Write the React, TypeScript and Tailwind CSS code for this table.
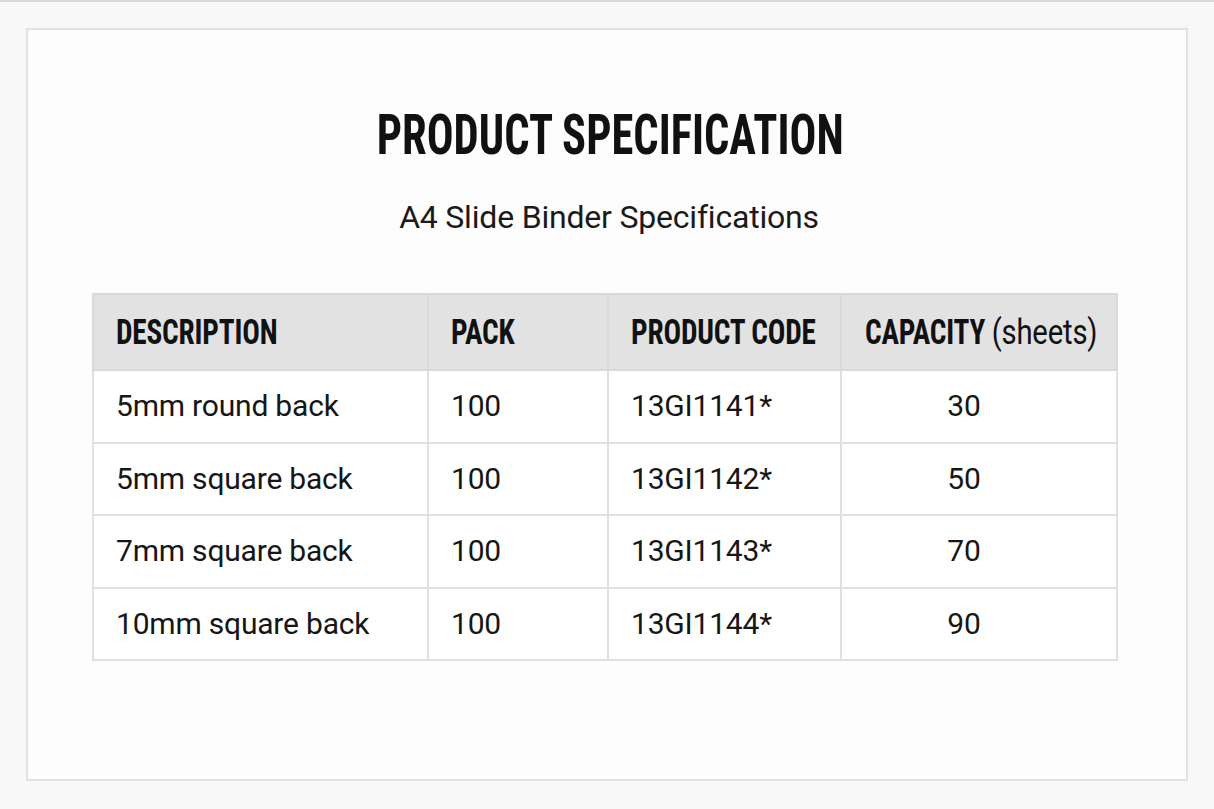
import React from "react";

const rows = [
  { d: "5mm round back", p: "100", c: "13GI1141*", cap: "30" },
  { d: "5mm square back", p: "100", c: "13GI1142*", cap: "50" },
  { d: "7mm square back", p: "100", c: "13GI1143*", cap: "70" },
  { d: "10mm square back", p: "100", c: "13GI1144*", cap: "90" },
];

function Head({ children }: { children: React.ReactNode }) {
  return (
    <span className="inline-block origin-left scale-x-[0.835] whitespace-nowrap font-['Roboto_Condensed',sans-serif] text-[35px] font-bold leading-none text-[#111]">
      {children}
    </span>
  );
}

export default function App() {
  return (
    <div className="h-[809px] w-full overflow-hidden border-t-2 border-[#d9d9d9] bg-[#f8f8f8] pt-[26px] font-['Roboto',sans-serif]">
      <div className="mx-[26px] flex h-[753px] flex-col items-center border-2 border-[#e2e2e2] bg-[#fdfdfd] pt-[78px]">
        <h1 className="ml-[6px] inline-block scale-x-[0.81] whitespace-nowrap font-['Roboto_Condensed',sans-serif] text-[55px] font-bold leading-none text-[#111]">
          PRODUCT SPECIFICATION
        </h1>
        <p className="mt-[38px] ml-[4px] text-[32px] leading-none tracking-[-0.2px] text-[#1a1a1a]">
          A4 Slide Binder Specifications
        </p>
        <table className="mt-[60px] mr-[4px] w-[1024px] table-fixed border-collapse text-[30px] leading-none tracking-[-0.2px] text-[#161616]">
          <colgroup>
            <col className="w-[335px]" />
            <col className="w-[180px]" />
            <col className="w-[233px]" />
            <col className="w-[276px]" />
          </colgroup>
          <thead>
            <tr className="h-[76px] bg-[#e2e2e2]">
              <th className="border-2 border-[#d9d9d9] pl-[22px] text-left align-middle">
                <Head>DESCRIPTION</Head>
              </th>
              <th className="border-2 border-[#d9d9d9] pl-[22px] text-left align-middle">
                <Head>PACK</Head>
              </th>
              <th className="border-2 border-[#d9d9d9] pl-[22px] text-left align-middle">
                <Head>PRODUCT CODE</Head>
              </th>
              <th className="border-2 border-[#d9d9d9] pl-[23px] text-left align-middle">
                <Head>
                  CAPACITY <span className="font-['Roboto',sans-serif] font-normal">(sheets)</span>
                </Head>
              </th>
            </tr>
          </thead>
          <tbody className="bg-white">
            {rows.map((r) => (
              <tr key={r.c} className="h-[72.5px]">
                <td className="border-2 border-[#e0e0e0] pl-[22px] align-middle">{r.d}</td>
                <td className="border-2 border-[#e0e0e0] pl-[22px] align-middle">{r.p}</td>
                <td className="border-2 border-[#e0e0e0] pl-[22px] align-middle">{r.c}</td>
                <td className="border-2 border-[#e0e0e0] pr-[54px] pl-6 text-center align-middle">{r.cap}</td>
              </tr>
            ))}
          </tbody>
        </table>
      </div>
    </div>
  );
}
